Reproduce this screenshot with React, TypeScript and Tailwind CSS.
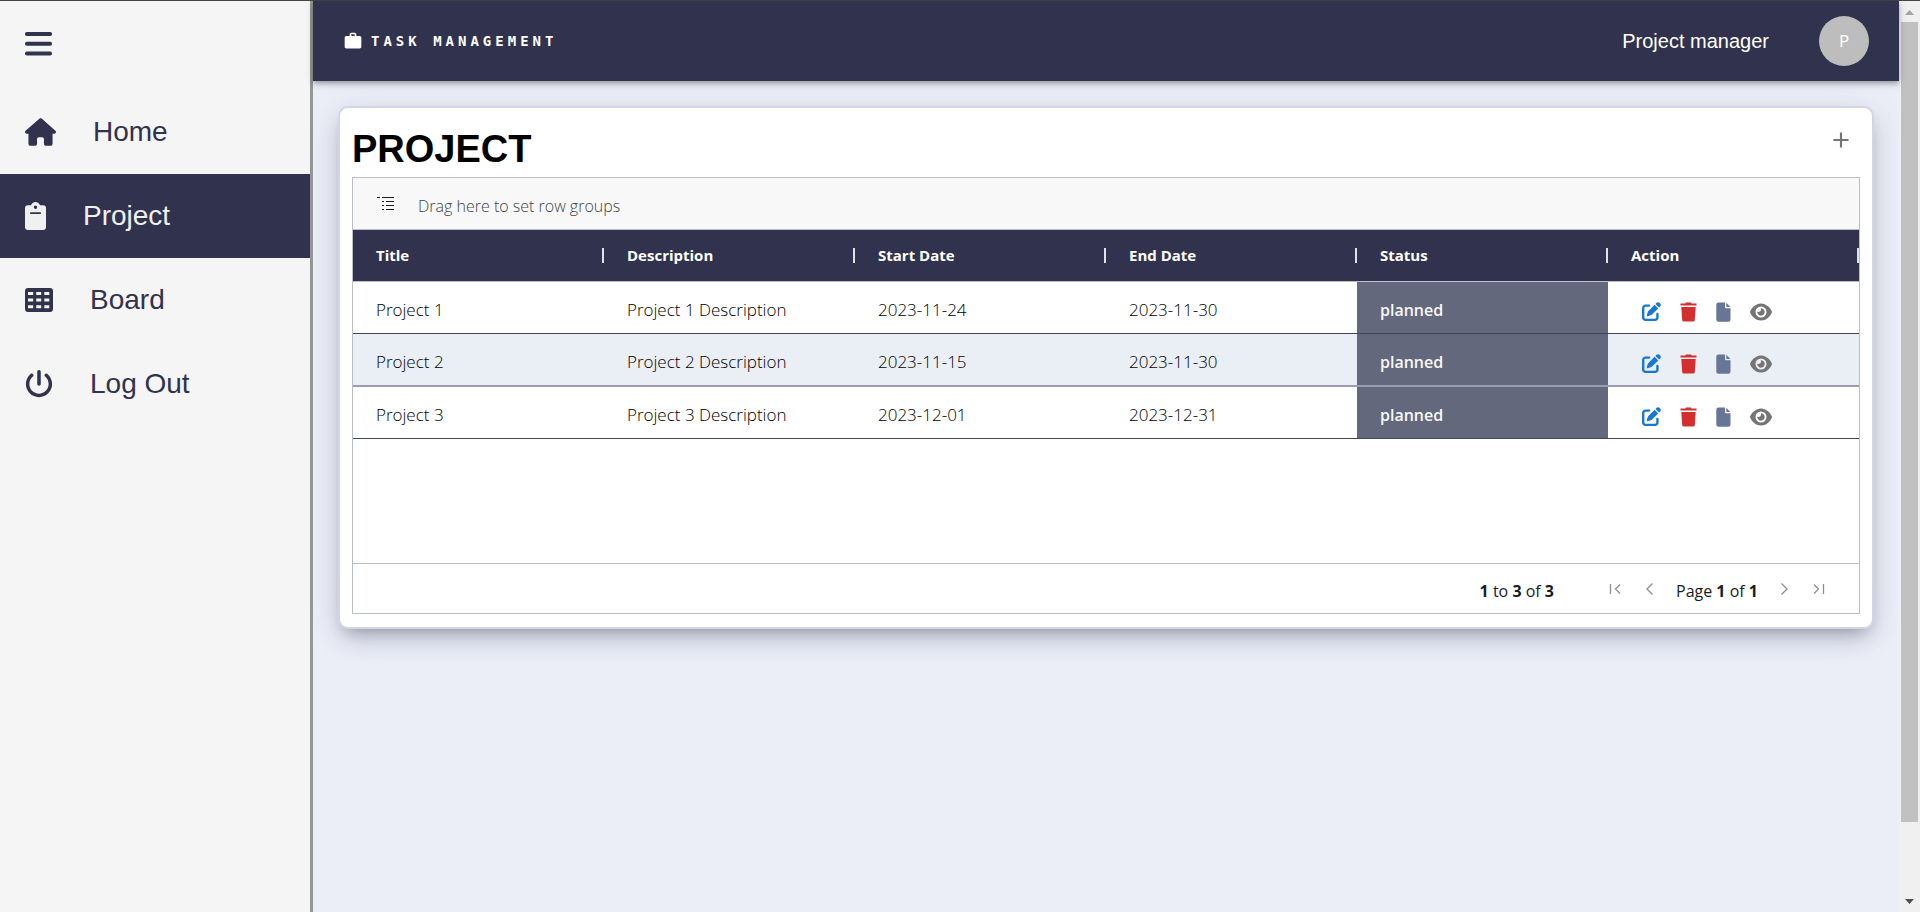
import { ReactNode } from "react";
import { FaHouse, FaPowerOff, FaEye, FaPenToSquare } from "react-icons/fa6";
import { MdAdd, MdWork } from "react-icons/md";

const UI = "font-['Open_Sans','Noto_Sans',sans-serif]";

function MenuIcon() {
  return (
    <svg viewBox="0 0 27 24" className="h-6 w-[27px] fill-current" aria-hidden="true">
      <rect y="0" width="27" height="4" rx="1.800" />
      <rect y="9.800" width="27" height="4" rx="1.800" />
      <rect y="19.600" width="27" height="4" rx="1.800" />
    </svg>
  );
}

function ClipboardIcon() {
  return (
    <svg viewBox="0 0 21 28" className="h-7 w-[21px] fill-current" aria-hidden="true">
      <path fillRule="evenodd" d="M3 3.200h3C6.700 1.300 8.400 0 10.500 0S14.300 1.300 15 3.200h3a3 3 0 0 1 3 3V25a3 3 0 0 1-3 3H3a3 3 0 0 1-3-3V6.200a3 3 0 0 1 3-3zM10.500 3.500a1.700 1.700 0 1 0 0 3.400 1.700 1.700 0 0 0 0-3.400zM5.800 10.200a.9.900 0 0 0 0 1.800h9.400a.9.900 0 0 0 0-1.800z" />
    </svg>
  );
}

function GridIcon() {
  return (
    <svg viewBox="0 0 28 24" className="h-6 w-7 fill-current" aria-hidden="true">
      <path fillRule="evenodd" d="M3 0h22a3 3 0 0 1 3 3v18a3 3 0 0 1-3 3H3a3 3 0 0 1-3-3V3a3 3 0 0 1 3-3zM3 4v3h5.200V4zM11.200 4v3h5V4zM19.300 4v3h5V4zM3 10.500v3h5.200v-3zM11.200 10.500v3h5v-3zM19.300 10.500v3h5v-3zM3 17.300v3h5.200v-3zM11.200 17.300v3h5v-3zM19.300 17.300v3h5v-3z" />
    </svg>
  );
}

function TrashIcon() {
  return (
    <svg viewBox="0 0 17 20" className="h-5 w-[17px] fill-current" aria-hidden="true">
      <path d="M5.300 1.400 6 .5h5l.7.900H16.500v2H.5v-2zM1.300 5h14.400l-.9 13a1.700 1.700 0 0 1-1.700 1.600H3.900A1.700 1.700 0 0 1 2.200 18z" />
    </svg>
  );
}

function FileIcon() {
  return (
    <svg viewBox="0 0 15 20" className="h-5 w-[15px] fill-current" aria-hidden="true">
      <path d="M2.500.5H9V5a1.200 1.200 0 0 0 1.200 1.200h4.300V17.500a2.200 2.200 0 0 1-2.200 2.200H2.500A2.200 2.200 0 0 1 .3 17.500V2.700A2.200 2.200 0 0 1 2.500.5zM10.300.7l4.100 4.200h-4.100z" />
    </svg>
  );
}

function GroupIcon() {
  return (
    <svg viewBox="0 0 17 14" className="h-[14px] w-[17px] fill-[#181d1f]" aria-hidden="true">
      <path d="M0 0h3v1H0zM5 0h12v1H5zM5 4h2v1H5zM9 4h8v1H9zM5 8h2v1H5zM9 8h8v1H9zM5 12h2v1H5zM9 12h8v1H9z" />
    </svg>
  );
}

function PageIcon({ d }: { d: string }) {
  return (
    <svg viewBox="0 0 16 16" className="size-4 fill-none stroke-[#8c8e90]" strokeWidth="1.300" aria-hidden="true">
      <path d={d} />
    </svg>
  );
}

const nav: { label: string; icon: ReactNode; active?: boolean }[] = [
  { label: "Home", icon: <FaHouse className="h-7 w-[31px]" /> },
  { label: "Project", icon: <ClipboardIcon />, active: true },
  { label: "Board", icon: <GridIcon /> },
  { label: "Log Out", icon: <FaPowerOff className="size-7" /> },
];

const columns = ["Title", "Description", "Start Date", "End Date", "Status", "Action"];

const rows = [
  ["Project 1", "Project 1 Description", "2023-11-24", "2023-11-30"],
  ["Project 2", "Project 2 Description", "2023-11-15", "2023-11-30"],
  ["Project 3", "Project 3 Description", "2023-12-01", "2023-12-31"],
];

function Sidebar() {
  return (
    <aside className="w-[310px] shrink-0 bg-[#f5f5f5] text-[#31324e]">
      <button aria-label="Toggle menu" className="mt-[31px] ml-[25px] block">
        <MenuIcon />
      </button>
      <nav className="mt-[34px] flex flex-col">
        {nav.map((n) => (
          <a
            key={n.label}
            href="#"
            className={`flex h-[84px] items-center gap-[37px] pl-[25px] text-[28px] leading-9 ${n.active ? "bg-[#31324e] text-[#f0f0f0]" : ""}`}
          >
            {n.icon}
            <span>{n.label}</span>
          </a>
        ))}
      </nav>
    </aside>
  );
}

function Header() {
  return (
    <header className="relative flex h-20 shrink-0 items-center bg-[#31324e] pr-[30px] pl-[30px] text-white shadow-[0_2px_4px_-1px_rgba(0,0,0,0.2),0_4px_5px_0_rgba(0,0,0,0.14),0_1px_10px_0_rgba(0,0,0,0.12)]">
      <MdWork className="size-5" />
      <span className="ml-2 font-['DejaVu_Sans_Mono',monospace] text-[14px] font-bold tracking-[4px]">TASK MANAGEMENT</span>
      <span className="ml-auto text-[20px]">Project manager</span>
      <button className="ml-[50px] size-[50px] rounded-full bg-[#bdbdbd] font-['Open_Sans',sans-serif] text-[17px]">P</button>
    </header>
  );
}

function Pagination() {
  return (
    <footer className={`flex h-[50px] items-center justify-end border-t border-[#babfc7] pr-[33px] text-[16px] text-[#181d1f] ${UI}`}>
      <span className="mr-[54px] pt-1"><b>1</b> to <b>3</b> of <b>3</b></span>
      <div className="flex items-center gap-[18px]">
        <button aria-label="First page"><PageIcon d="M2.500 3v10M12 3.500 7.500 8l4.500 4.500" /></button>
        <button aria-label="Previous page"><PageIcon d="M10.500 2.500 5 8l5.500 5.500" /></button>
        <span className="pt-1">Page <b>1</b> of <b>1</b></span>
        <button aria-label="Next page"><PageIcon d="M5.500 2.500 11 8l-5.500 5.500" /></button>
        <button aria-label="Last page"><PageIcon d="M13.500 3v10M4 3.500 8.500 8 4 12.500" /></button>
      </div>
    </footer>
  );
}

function ProjectTable() {
  return (
    <table className={`w-full table-fixed border-separate border-spacing-0 text-left text-black ${UI}`}>
      <thead>
        <tr className="bg-[#31324e] text-[15px] text-white">
          {columns.map((c) => (
            <th key={c} className="h-[53px] border-y border-[#babfc7] p-0 font-bold">
              <div className="flex items-center justify-between pl-[23px]">
                {c}
                <span className="h-[15px] w-[2px] bg-[#dde2eb]" />
              </div>
            </th>
          ))}
        </tr>
      </thead>
      <tbody className="text-[17px]">
        {rows.map((r, i) => (
          <tr
            key={r[0]}
            className={i === 1 ? "h-[53px] bg-[#eaeef5] *:border-b-2 *:border-[#9a9cb0]" : "h-[52px] *:border-b *:border-[#42435d]"}
          >
            {r.map((v, j) => (
              <td key={j} className="p-0 pt-1 pl-[23px] font-light">{v}</td>
            ))}
            <td className="bg-[#64687c] p-0 pt-1 pl-[23px] text-[16px] font-semibold text-[#f8f8f8]">planned</td>
            <td className="p-0 pt-2 pl-[34px]">
              <div className="flex items-center gap-[19px]">
                <button aria-label="Edit" className="text-[#1976d2]"><FaPenToSquare className="size-[19px]" /></button>
                <button aria-label="Delete" className="text-[#d32f2f]"><TrashIcon /></button>
                <button aria-label="Details" className="text-[#677696]"><FileIcon /></button>
                <button aria-label="View" className="text-[#757575]"><FaEye className="h-5 w-[22px]" /></button>
              </div>
            </td>
          </tr>
        ))}
      </tbody>
    </table>
  );
}

function ScrollRail() {
  return (
    <div className="flex w-[21px] shrink-0 flex-col items-center bg-[#f0f0f0]" aria-hidden="true">
      <svg viewBox="0 0 21 21" className="w-[21px] shrink-0"><path d="M6 14h9l-4.500-5z" fill="#a3a3a3" /></svg>
      <div className="w-[17px] flex-[801] bg-[#c1c1c1]" />
      <div className="flex-[69]" />
      <svg viewBox="0 0 21 21" className="w-[21px] shrink-0"><path d="M6 8h9l-4.500 5z" fill="#505050" /></svg>
    </div>
  );
}

export default function App() {
  return (
    <div className="flex min-h-screen border-t border-[#454545] bg-[#f5f5f5] font-['Liberation_Sans',Arial,sans-serif]">
      <Sidebar />
      <div className="flex min-w-0 flex-1 flex-col border-l-3 border-[#969696] bg-[#ebeef7]">
        <Header />
        <main className="px-[25px] pt-[25px]">
          <section className="rounded-[10px] border-2 border-[#d3d5e7] bg-white px-3 pb-[13px] shadow-[0_13px_27px_-5px_rgba(50,50,93,0.25),0_8px_16px_-8px_rgba(0,0,0,0.3),0_0_40px_rgba(50,50,93,0.06)]">
            <div className="flex h-[69px] justify-between pr-[6px]">
              <h1 className="pt-[18px] text-[38px] leading-[46px] font-bold text-black">PROJECT</h1>
              <button aria-label="Add project" className="mt-[19px] size-[26px] text-[#757575]"><MdAdd className="size-[26px]" /></button>
            </div>
            <div className="border border-[#babfc7]">
              <div className={`flex h-[51px] items-center gap-6 bg-[#f8f8f8] pl-6 text-[16px] font-light text-[#404446] ${UI}`}>
                <GroupIcon />
                <span className="pt-1">Drag here to set row groups</span>
              </div>
              <ProjectTable />
              <div className="h-[124px]" />
              <Pagination />
            </div>
          </section>
        </main>
      </div>
      <ScrollRail />
    </div>
  );
}
